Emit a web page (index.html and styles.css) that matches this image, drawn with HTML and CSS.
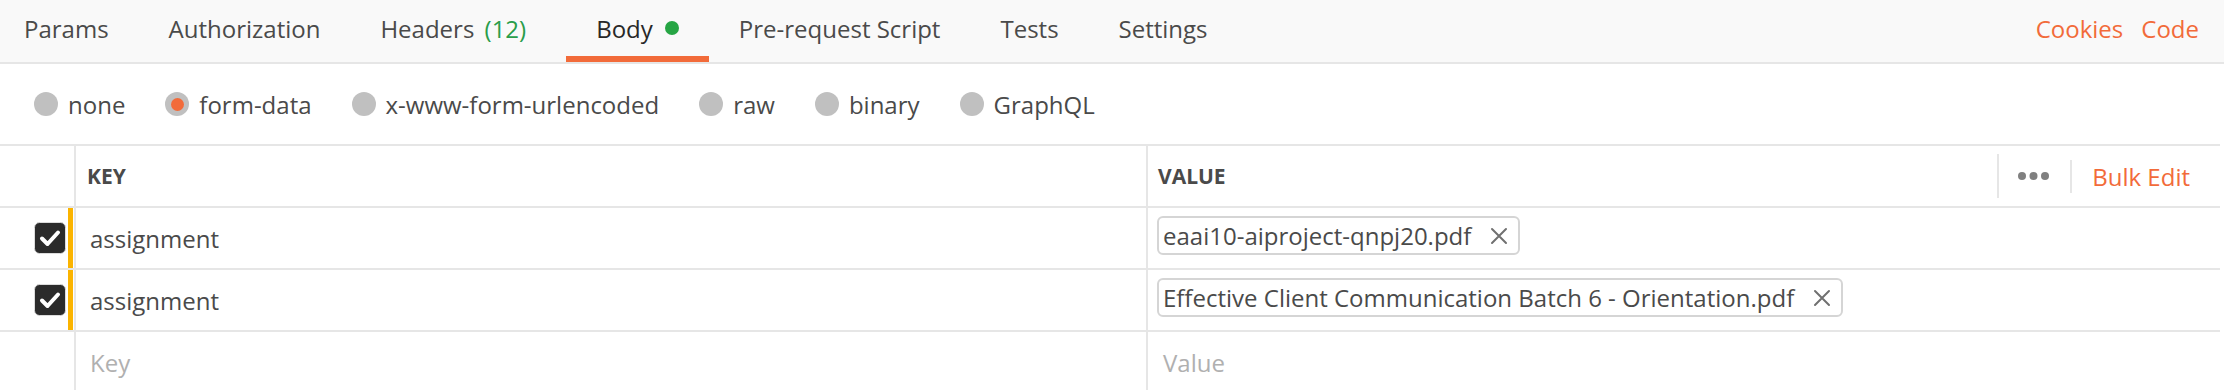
FILE: index.html
```html
<!DOCTYPE html>
<html lang="en">
<head>
  <meta charset="UTF-8">
  <meta name="viewport" content="width=device-width, initial-scale=1.0">
  <title>Request Body</title>
  <link rel="stylesheet" href="styles.css">
</head>
<body>
  <div class="tabs">
    <div class="tab-list">
      <div class="tab">Params</div>
      <div class="tab">Authorization</div>
      <div class="tab">Headers&nbsp;<span class="count">(12)</span></div>
      <div class="tab active">Body<span class="dot"></span></div>
      <div class="tab">Pre-request Script</div>
      <div class="tab">Tests</div>
      <div class="tab">Settings</div>
    </div>
    <div class="tab-links">
      <span>Cookies</span>
      <span>Code</span>
    </div>
  </div>

  <div class="body-types">
    <label class="radio"><span class="radio-dot"></span>none</label>
    <label class="radio checked"><span class="radio-dot"></span>form-data</label>
    <label class="radio"><span class="radio-dot"></span>x-www-form-urlencoded</label>
    <label class="radio"><span class="radio-dot"></span>raw</label>
    <label class="radio"><span class="radio-dot"></span>binary</label>
    <label class="radio"><span class="radio-dot"></span>GraphQL</label>
  </div>

  <div class="kv-table">
    <div class="kv-row kv-head">
      <div class="cell cell-check"></div>
      <div class="cell cell-key">Key</div>
      <div class="cell cell-value">
        Value
        <div class="head-actions">
          <span class="divider tall"></span>
          <svg class="more" width="31" height="8" viewBox="0 0 31 8">
            <circle cx="4" cy="4" r="4" fill="#808080"/>
            <circle cx="15.5" cy="4" r="4" fill="#808080"/>
            <circle cx="27" cy="4" r="4" fill="#808080"/>
          </svg>
          <span class="divider"></span>
          <span class="bulk-edit">Bulk Edit</span>
        </div>
      </div>
    </div>

    <div class="kv-row">
      <div class="cell cell-check">
        <svg class="checkbox" width="32" height="32" viewBox="0 0 32 32">
          <rect x="0.5" y="0.5" width="31" height="31" rx="5" fill="#2b2b2b" stroke="#dcdcdc"/>
          <path d="M8 16.5 L13.5 22 L24 10.5" fill="none" stroke="#fff" stroke-width="4" stroke-linecap="round" stroke-linejoin="round"/>
        </svg>
        <span class="changed-bar"></span>
      </div>
      <div class="cell cell-key">assignment</div>
      <div class="cell cell-value">
        <span class="file-chip">eaai10-aiproject-qnpj20.pdf
          <svg class="chip-close" width="20" height="20" viewBox="0 0 20 20">
            <path d="M3 3 L17 17 M17 3 L3 17" stroke="#707070" stroke-width="2" stroke-linecap="round"/>
          </svg>
        </span>
      </div>
    </div>

    <div class="kv-row">
      <div class="cell cell-check">
        <svg class="checkbox" width="32" height="32" viewBox="0 0 32 32">
          <rect x="0.5" y="0.5" width="31" height="31" rx="5" fill="#2b2b2b" stroke="#dcdcdc"/>
          <path d="M8 16.5 L13.5 22 L24 10.5" fill="none" stroke="#fff" stroke-width="4" stroke-linecap="round" stroke-linejoin="round"/>
        </svg>
        <span class="changed-bar"></span>
      </div>
      <div class="cell cell-key">assignment</div>
      <div class="cell cell-value">
        <span class="file-chip">Effective Client Communication Batch 6 - Orientation.pdf
          <svg class="chip-close" width="20" height="20" viewBox="0 0 20 20">
            <path d="M3 3 L17 17 M17 3 L3 17" stroke="#707070" stroke-width="2" stroke-linecap="round"/>
          </svg>
        </span>
      </div>
    </div>

    <div class="kv-row kv-empty">
      <div class="cell cell-check"></div>
      <div class="cell cell-key placeholder">Key</div>
      <div class="cell cell-value placeholder">Value</div>
    </div>
  </div>
</body>
</html>
```

FILE: styles.css
```css
body {
  margin: 0;
  font-family: 'Open Sans', 'Liberation Sans', sans-serif;
  font-size: 24px;
  color: #4a4a4a;
  background-color: #fff;
}

.tabs {
  display: flex;
  justify-content: space-between;
  height: 62px;
  background-color: #f9f9f9;
  border-bottom: 2px solid #e6e6e6;
}
.tab-list {
  display: flex;
}
.tab {
  display: flex;
  align-items: center;
  padding: 0 30px;
  border-bottom: 6px solid transparent;
  white-space: nowrap;
}
.tab:first-child {
  padding-left: 24px;
}
.tab.active {
  color: #282828;
  border-bottom-color: #f26b3a;
}
.count {
  color: #2a9d4a;
  margin-left: 4px;
  margin-right: 10px;
}
.dot {
  width: 14px;
  height: 14px;
  margin-left: 12px;
  border-radius: 50%;
  background-color: #26a544;
}
.tab-links {
  display: flex;
  align-items: center;
  gap: 18px;
  padding: 0 25px 6px 0;
  color: #f26b3a;
}

.body-types {
  display: flex;
  align-items: center;
  gap: 40px;
  height: 80px;
  padding-left: 34px;
}
.radio {
  display: flex;
  align-items: center;
}
.radio-dot {
  display: flex;
  align-items: center;
  justify-content: center;
  width: 24px;
  height: 24px;
  margin-right: 10px;
  border-radius: 50%;
  background-color: #c0c0c0;
}
.radio.checked .radio-dot::after {
  content: "";
  width: 13px;
  height: 13px;
  border-radius: 50%;
  background-color: #f26b3a;
}

.kv-table {
  margin-right: 4px;
  border-top: 2px solid #e6e6e6;
}
.kv-row {
  display: grid;
  grid-template-columns: 76px 1072px 1fr;
  height: 62px;
  box-sizing: border-box;
  border-bottom: 2px solid #e6e6e6;
}
.cell {
  display: flex;
  align-items: center;
  border-right: 2px solid #e6e6e6;
  white-space: nowrap;
}
.cell:last-child {
  border-right: none;
}
.cell-key {
  padding-left: 14px;
}
.cell-value {
  padding-left: 9px;
}
.kv-head .cell {
  font-size: 21px;
  font-weight: 700;
  text-transform: uppercase;
}
.kv-head .cell-key {
  padding-left: 11px;
}
.kv-head .cell-value {
  padding-left: 10px;
}
.head-actions {
  display: flex;
  align-items: center;
  margin-left: auto;
  padding-right: 30px;
  font-size: 24px;
  font-weight: 400;
  text-transform: none;
}
.divider {
  width: 2px;
  height: 33px;
  background-color: #e6e6e6;
}
.divider.tall {
  height: 44px;
}
.more {
  margin: 0 21px 0 19px;
}
.bulk-edit {
  margin-left: 20px;
  color: #f26b3a;
}

.cell-check {
  padding-left: 34px;
  align-items: stretch;
}
.checkbox {
  align-self: center;
}
.changed-bar {
  width: 5px;
  margin-left: 2px;
  background-color: #fbb400;
}

.file-chip {
  display: inline-flex;
  align-items: center;
  height: 39px;
  box-sizing: border-box;
  margin-bottom: 5px;
  padding: 0 9px 0 4px;
  border: 2px solid #d5d5d5;
  border-radius: 6px;
}
.chip-close {
  margin-left: 18px;
}

.placeholder {
  color: #b0b0b0;
}
.kv-empty .cell-value {
  padding-left: 15px;
}
```
